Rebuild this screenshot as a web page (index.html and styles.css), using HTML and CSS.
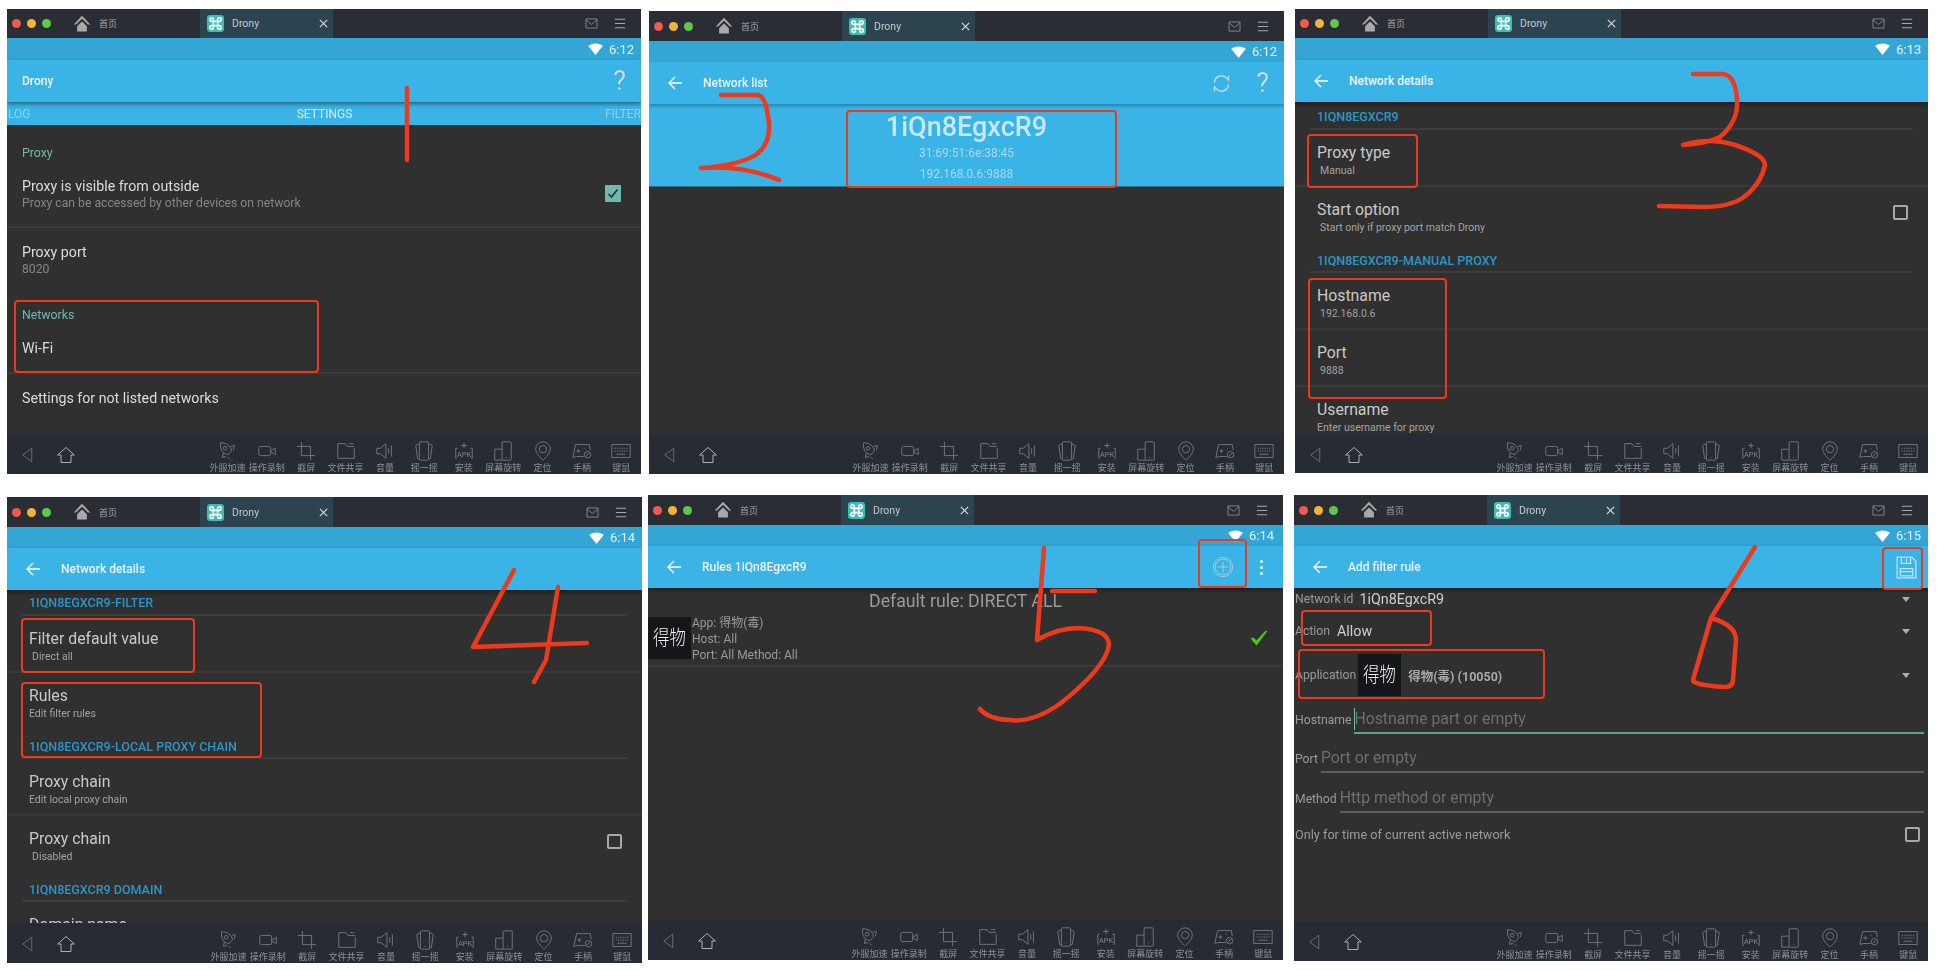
FILE: index.html
```html
<!DOCTYPE html>
<html lang="zh-CN">
<head>
  <meta charset="UTF-8">
  <title>Drony 设置步骤</title>
  <link rel="stylesheet" href="styles.css">
</head>
<body>
  <!-- icon sprite -->
  <svg class="sprite" xmlns="http://www.w3.org/2000/svg">
    <symbol id="i-rocket" viewBox="0 0 24 24"><path d="M5 3c6 0 11 3 12 9l-4 4C7 15 4 10 5 3z"/><circle cx="10" cy="9" r="2"/><path d="M16 7l4-1-1 5M8 14l-1 5 4-1M13 19l2 2"/></symbol>
    <symbol id="i-video" viewBox="0 0 24 24"><rect x="3" y="7" width="13" height="10" rx="2"/><path d="M16 12l5-3v7l-5-3"/></symbol>
    <symbol id="i-crop" viewBox="0 0 24 24"><path d="M7 2v15h15M2 7h15v15"/></symbol>
    <symbol id="i-folder" viewBox="0 0 24 24"><path d="M21 9v11H3V4h8l2 3h8M15 4h5"/></symbol>
    <symbol id="i-sound" viewBox="0 0 24 24"><path d="M3 9v6h4l6 5V4L7 9zM16 9v6M19 6v12"/></symbol>
    <symbol id="i-shake" viewBox="0 0 24 24"><rect x="7" y="2" width="10" height="20" rx="1"/><path d="M7 4L3 6l2 14 2 1M17 4l4 2-2 14-2 1M11.500 19h1"/></symbol>
    <symbol id="i-apk" viewBox="0 0 24 24"><path d="M5 9H3v11h1M19 9h2v11h-1M12 3v6M9 6h6"/><text class="apk-text" x="12" y="19">APK</text></symbol>
    <symbol id="i-rotate" viewBox="0 0 24 24"><rect x="11" y="2" width="10" height="20" rx="1"/><path d="M11 10H3v12h8M15.500 19h1"/></symbol>
    <symbol id="i-pin" viewBox="0 0 24 24"><path d="M12 2a8 8 0 0 1 8 8c0 5-8 12-8 12S4 15 4 10a8 8 0 0 1 8-8z"/><circle cx="12" cy="10" r="4"/></symbol>
    <symbol id="i-pad" viewBox="0 0 24 24"><path d="M5 5h15l1 6M14 18H6l-4 1L5 5M6 12h4M8 10v4M14 9h1"/><circle cx="18" cy="16" r="3.500"/><path d="M16 18l4-4"/></symbol>
    <symbol id="i-keys" viewBox="0 0 24 24"><rect x="2" y="5" width="20" height="14"/><path d="M5 9h14M5 12h14" stroke-dasharray="1.500 1"/><path d="M7 15.500h10"/></symbol>
    <symbol id="i-back" viewBox="0 0 24 24"><path d="M17 3L5 12l12 9z"/></symbol>
    <symbol id="i-house" viewBox="0 0 24 24"><path d="M2 12L12 3l10 9h-4v9H6v-9z"/></symbol>
    <symbol id="i-home" viewBox="0 0 24 24"><path d="M12 1L1 12.500h3L12 5l8 7.500h3zM5.500 15L12 8.500l6.500 6.500v7h-13z"/></symbol>
    <symbol id="i-cmd" viewBox="0 0 24 24"><path d="M9 9h6v6H9zM9 9H6.500A2.500 2.500 0 1 1 9 6.500zM15 9V6.500A2.500 2.500 0 1 1 17.500 9zM15 15h2.500a2.500 2.500 0 1 1-2.500 2.500zM9 15v2.500A2.500 2.500 0 1 1 6.500 15z"/></symbol>
    <symbol id="i-x" viewBox="0 0 12 12"><path d="M2 2l8 8M10 2l-8 8"/></symbol>
    <symbol id="i-mail" viewBox="0 0 14 12"><path d="M1 1h12v10H1zM1 2l6 5 6-5"/></symbol>
    <symbol id="i-menu" viewBox="0 0 14 14"><path d="M1 2h12M1 7h12M1 12h12"/></symbol>
    <symbol id="i-wifi" viewBox="0 0 16 13"><path d="M0 3Q8-2 16 3L8 13z"/></symbol>
    <symbol id="i-arrow" viewBox="0 0 16 16"><path d="M15 8H2M8 2L2 8l6 6"/></symbol>
    <symbol id="i-sync" viewBox="0 0 24 24"><path d="M4 11a8 8 0 0 1 14-5l2 2V3M20 13a8 8 0 0 1-14 5l-2-2v5"/></symbol>
    <symbol id="i-plus" viewBox="0 0 24 24"><circle cx="12" cy="12" r="10.500"/><circle cx="12" cy="12" r="8.500"/><path d="M12 6v12M6 12h12"/></symbol>
    <symbol id="i-save" viewBox="0 0 20 24"><path d="M1 2h14l4 4v16H1zM5 2v6h9V2M10 3v4M4 13h12v7H4zM4 16h12"/></symbol>
    <symbol id="i-tick" viewBox="0 0 24 24"><path d="M2 13l7 8L22 4l-2-1L9 15l-4-4z"/></symbol>
    <symbol id="i-check" viewBox="0 0 16 16"><path d="M3.500 8.500l3 3 6-7.500"/></symbol>
  </svg>

  <main class="sheet">

    <!-- 1 -->
    <section class="win win-1">
      <div class="screen short">
        <header class="tabbar">
          <span class="dot dot-red"></span><span class="dot dot-yellow"></span><span class="dot dot-green"></span>
          <svg class="home-ico"><use href="#i-home"/></svg><span class="home-txt">首页</span>
          <div class="tab"><svg class="tab-ico"><use href="#i-cmd"/></svg><span class="tab-txt">Drony</span><svg class="tab-x"><use href="#i-x"/></svg></div>
          <svg class="mail"><use href="#i-mail"/></svg><svg class="menu"><use href="#i-menu"/></svg>
        </header>
        <div class="status"><svg class="wifi"><use href="#i-wifi"/></svg><span>6:12</span></div>
        <div class="toolbar"><span class="title title-main">Drony</span><span class="help">?</span></div>
        <div class="tabs"><span>LOG</span><span class="tabs-on">SETTINGS</span><span class="tabs-end">FILTER</span></div>
        <div class="body">
          <div class="cat cat-first">Proxy</div>
          <div class="pref pref-tight line"><div><div class="pref-t">Proxy is visible from outside</div><div class="pref-s">Proxy can be accessed by other devices on network</div></div><span class="check-on"><svg><use href="#i-check"/></svg></span></div>
          <div class="pref"><div><div class="pref-t">Proxy port</div><div class="pref-s">8020</div></div></div>
          <div class="cat">Networks</div>
          <div class="pref pref-wifi line"><div class="pref-t">Wi-Fi</div></div>
          <div class="pref"><div class="pref-t">Settings for not listed networks</div></div>
        </div>
        <footer class="navbar">
          <svg class="nav-back"><use href="#i-back"/></svg><svg class="nav-home"><use href="#i-house"/></svg>
          <div class="tools">
            <div class="tool"><svg><use href="#i-rocket"/></svg><span>外服加速</span></div>
            <div class="tool"><svg><use href="#i-video"/></svg><span>操作录制</span></div>
            <div class="tool"><svg><use href="#i-crop"/></svg><span>截屏</span></div>
            <div class="tool"><svg><use href="#i-folder"/></svg><span>文件共享</span></div>
            <div class="tool"><svg><use href="#i-sound"/></svg><span>音量</span></div>
            <div class="tool"><svg><use href="#i-shake"/></svg><span>摇一摇</span></div>
            <div class="tool"><svg><use href="#i-apk"/></svg><span>安装</span></div>
            <div class="tool"><svg><use href="#i-rotate"/></svg><span>屏幕旋转</span></div>
            <div class="tool"><svg><use href="#i-pin"/></svg><span>定位</span></div>
            <div class="tool"><svg><use href="#i-pad"/></svg><span>手柄</span></div>
            <div class="tool"><svg><use href="#i-keys"/></svg><span>键鼠</span></div>
          </div>
        </footer>
      </div>
      <svg class="marks" viewBox="0 0 634 465">
        <path d="M400 79V151"/>
        <rect class="box" x="8" y="292" width="303" height="71" rx="3"/>
      </svg>
    </section>

    <!-- 2 -->
    <section class="win win-2">
      <div class="screen">
        <header class="tabbar">
          <span class="dot dot-red"></span><span class="dot dot-yellow"></span><span class="dot dot-green"></span>
          <svg class="home-ico"><use href="#i-home"/></svg><span class="home-txt">首页</span>
          <div class="tab"><svg class="tab-ico"><use href="#i-cmd"/></svg><span class="tab-txt">Drony</span><svg class="tab-x"><use href="#i-x"/></svg></div>
          <svg class="mail"><use href="#i-mail"/></svg><svg class="menu"><use href="#i-menu"/></svg>
        </header>
        <div class="status"><svg class="wifi"><use href="#i-wifi"/></svg><span>6:12</span></div>
        <div class="toolbar toolbar-flat"><svg class="arrow"><use href="#i-arrow"/></svg><span class="title">Network list</span><svg class="act act-sync"><use href="#i-sync"/></svg><span class="help help-near">?</span></div>
        <div class="body">
          <div class="net">
            <div class="net-id">1iQn8EgxcR9</div>
            <div class="net-sub">31:69:51:6e:38:45</div>
            <div class="net-sub">192.168.0.6:9888</div>
          </div>
        </div>
        <footer class="navbar">
          <svg class="nav-back"><use href="#i-back"/></svg><svg class="nav-home"><use href="#i-house"/></svg>
          <div class="tools">
            <div class="tool"><svg><use href="#i-rocket"/></svg><span>外服加速</span></div>
            <div class="tool"><svg><use href="#i-video"/></svg><span>操作录制</span></div>
            <div class="tool"><svg><use href="#i-crop"/></svg><span>截屏</span></div>
            <div class="tool"><svg><use href="#i-folder"/></svg><span>文件共享</span></div>
            <div class="tool"><svg><use href="#i-sound"/></svg><span>音量</span></div>
            <div class="tool"><svg><use href="#i-shake"/></svg><span>摇一摇</span></div>
            <div class="tool"><svg><use href="#i-apk"/></svg><span>安装</span></div>
            <div class="tool"><svg><use href="#i-rotate"/></svg><span>屏幕旋转</span></div>
            <div class="tool"><svg><use href="#i-pin"/></svg><span>定位</span></div>
            <div class="tool"><svg><use href="#i-pad"/></svg><span>手柄</span></div>
            <div class="tool"><svg><use href="#i-keys"/></svg><span>键鼠</span></div>
          </div>
        </footer>
      </div>
      <svg class="marks" viewBox="0 0 635 463">
        <path d="M72 84H108Q116 84 119 105Q124 130 108 143Q92 154 52 157Q95 154 130 169"/>
        <rect class="box" x="198" y="100" width="269" height="76" rx="3"/>
      </svg>
    </section>

    <!-- 3 -->
    <section class="win win-3">
      <div class="screen short">
        <header class="tabbar">
          <span class="dot dot-red"></span><span class="dot dot-yellow"></span><span class="dot dot-green"></span>
          <svg class="home-ico"><use href="#i-home"/></svg><span class="home-txt">首页</span>
          <div class="tab"><svg class="tab-ico"><use href="#i-cmd"/></svg><span class="tab-txt">Drony</span><svg class="tab-x"><use href="#i-x"/></svg></div>
          <svg class="mail"><use href="#i-mail"/></svg><svg class="menu"><use href="#i-menu"/></svg>
        </header>
        <div class="status"><svg class="wifi"><use href="#i-wifi"/></svg><span>6:13</span></div>
        <div class="toolbar"><svg class="arrow"><use href="#i-arrow"/></svg><span class="title">Network details</span></div>
        <div class="body">
          <div class="head head-top">1IQN8EGXCR9</div>
          <div class="item line"><div class="item-t">Proxy type</div><div class="item-s">Manual</div></div>
          <div class="item"><div class="item-row"><div><div class="item-t">Start option</div><div class="item-s">Start only if proxy port match Drony</div></div><span class="check"></span></div></div>
          <div class="head head-next">1IQN8EGXCR9-MANUAL PROXY</div>
          <div class="item line"><div class="item-t">Hostname</div><div class="item-s">192.168.0.6</div></div>
          <div class="item line"><div class="item-t">Port</div><div class="item-s">9888</div></div>
          <div class="item"><div class="item-t">Username</div><div class="item-s item-s-flush">Enter username for proxy</div></div>
        </div>
        <footer class="navbar">
          <svg class="nav-back"><use href="#i-back"/></svg><svg class="nav-home"><use href="#i-house"/></svg>
          <div class="tools">
            <div class="tool"><svg><use href="#i-rocket"/></svg><span>外服加速</span></div>
            <div class="tool"><svg><use href="#i-video"/></svg><span>操作录制</span></div>
            <div class="tool"><svg><use href="#i-crop"/></svg><span>截屏</span></div>
            <div class="tool"><svg><use href="#i-folder"/></svg><span>文件共享</span></div>
            <div class="tool"><svg><use href="#i-sound"/></svg><span>音量</span></div>
            <div class="tool"><svg><use href="#i-shake"/></svg><span>摇一摇</span></div>
            <div class="tool"><svg><use href="#i-apk"/></svg><span>安装</span></div>
            <div class="tool"><svg><use href="#i-rotate"/></svg><span>屏幕旋转</span></div>
            <div class="tool"><svg><use href="#i-pin"/></svg><span>定位</span></div>
            <div class="tool"><svg><use href="#i-pad"/></svg><span>手柄</span></div>
            <div class="tool"><svg><use href="#i-keys"/></svg><span>键鼠</span></div>
          </div>
        </footer>
      </div>
      <svg class="marks" viewBox="0 0 633 464">
        <path d="M398 65H428Q440 66 442 90Q444 112 425 128Q410 135 388 136Q415 128 440 136Q470 146 470 156Q466 175 449 188Q435 198 408 198L364 197"/>
        <rect class="box" x="13" y="126" width="109" height="52" rx="3"/>
        <rect class="box" x="14" y="270" width="137" height="119" rx="3"/>
      </svg>
    </section>

    <!-- 4 -->
    <section class="win win-4">
      <div class="screen">
        <header class="tabbar">
          <span class="dot dot-red"></span><span class="dot dot-yellow"></span><span class="dot dot-green"></span>
          <svg class="home-ico"><use href="#i-home"/></svg><span class="home-txt">首页</span>
          <div class="tab"><svg class="tab-ico"><use href="#i-cmd"/></svg><span class="tab-txt">Drony</span><svg class="tab-x"><use href="#i-x"/></svg></div>
          <svg class="mail"><use href="#i-mail"/></svg><svg class="menu"><use href="#i-menu"/></svg>
        </header>
        <div class="status"><svg class="wifi"><use href="#i-wifi"/></svg><span>6:14</span></div>
        <div class="toolbar"><svg class="arrow"><use href="#i-arrow"/></svg><span class="title">Network details</span></div>
        <div class="body">
          <div class="head">1IQN8EGXCR9-FILTER</div>
          <div class="item line"><div class="item-t">Filter default value</div><div class="item-s">Direct all</div></div>
          <div class="item"><div class="item-t">Rules</div><div class="item-s item-s-flush">Edit filter rules</div></div>
          <div class="head head-next">1IQN8EGXCR9-LOCAL PROXY CHAIN</div>
          <div class="item line"><div class="item-t">Proxy chain</div><div class="item-s item-s-flush">Edit local proxy chain</div></div>
          <div class="item"><div class="item-row"><div><div class="item-t">Proxy chain</div><div class="item-s">Disabled</div></div><span class="check"></span></div></div>
          <div class="head head-next">1IQN8EGXCR9 DOMAIN</div>
          <div class="item"><div class="item-t">Domain name</div></div>
        </div>
        <footer class="navbar">
          <svg class="nav-back"><use href="#i-back"/></svg><svg class="nav-home"><use href="#i-house"/></svg>
          <div class="tools">
            <div class="tool"><svg><use href="#i-rocket"/></svg><span>外服加速</span></div>
            <div class="tool"><svg><use href="#i-video"/></svg><span>操作录制</span></div>
            <div class="tool"><svg><use href="#i-crop"/></svg><span>截屏</span></div>
            <div class="tool"><svg><use href="#i-folder"/></svg><span>文件共享</span></div>
            <div class="tool"><svg><use href="#i-sound"/></svg><span>音量</span></div>
            <div class="tool"><svg><use href="#i-shake"/></svg><span>摇一摇</span></div>
            <div class="tool"><svg><use href="#i-apk"/></svg><span>安装</span></div>
            <div class="tool"><svg><use href="#i-rotate"/></svg><span>屏幕旋转</span></div>
            <div class="tool"><svg><use href="#i-pin"/></svg><span>定位</span></div>
            <div class="tool"><svg><use href="#i-pad"/></svg><span>手柄</span></div>
            <div class="tool"><svg><use href="#i-keys"/></svg><span>键鼠</span></div>
          </div>
        </footer>
      </div>
      <svg class="marks" viewBox="0 0 635 466">
        <path d="M507 73L466 150L580 146M551 90L539 163L527 185"/>
        <rect class="box" x="15" y="122" width="172" height="53" rx="3"/>
        <rect class="box" x="15" y="186" width="239" height="74" rx="3"/>
      </svg>
    </section>

    <!-- 5 -->
    <section class="win win-5">
      <div class="screen">
        <header class="tabbar">
          <span class="dot dot-red"></span><span class="dot dot-yellow"></span><span class="dot dot-green"></span>
          <svg class="home-ico"><use href="#i-home"/></svg><span class="home-txt">首页</span>
          <div class="tab"><svg class="tab-ico"><use href="#i-cmd"/></svg><span class="tab-txt">Drony</span><svg class="tab-x"><use href="#i-x"/></svg></div>
          <svg class="mail"><use href="#i-mail"/></svg><svg class="menu"><use href="#i-menu"/></svg>
        </header>
        <div class="status"><svg class="wifi"><use href="#i-wifi"/></svg><span>6:14</span></div>
        <div class="toolbar"><svg class="arrow"><use href="#i-arrow"/></svg><span class="title">Rules 1iQn8EgxcR9</span><svg class="act act-plus"><use href="#i-plus"/></svg><span class="more"><i></i><i></i><i></i></span></div>
        <div class="body">
          <div class="rule-head">Default rule: DIRECT ALL</div>
          <div class="rule">
            <span class="app-ico"><span>得物</span></span>
            <div class="rule-txt"><div>App: 得物(毒)</div><div>Host: All</div><div>Port: All Method: All</div></div>
            <svg class="tick"><use href="#i-tick"/></svg>
          </div>
        </div>
        <footer class="navbar">
          <svg class="nav-back"><use href="#i-back"/></svg><svg class="nav-home"><use href="#i-house"/></svg>
          <div class="tools">
            <div class="tool"><svg><use href="#i-rocket"/></svg><span>外服加速</span></div>
            <div class="tool"><svg><use href="#i-video"/></svg><span>操作录制</span></div>
            <div class="tool"><svg><use href="#i-crop"/></svg><span>截屏</span></div>
            <div class="tool"><svg><use href="#i-folder"/></svg><span>文件共享</span></div>
            <div class="tool"><svg><use href="#i-sound"/></svg><span>音量</span></div>
            <div class="tool"><svg><use href="#i-shake"/></svg><span>摇一摇</span></div>
            <div class="tool"><svg><use href="#i-apk"/></svg><span>安装</span></div>
            <div class="tool"><svg><use href="#i-rotate"/></svg><span>屏幕旋转</span></div>
            <div class="tool"><svg><use href="#i-pin"/></svg><span>定位</span></div>
            <div class="tool"><svg><use href="#i-pad"/></svg><span>手柄</span></div>
            <div class="tool"><svg><use href="#i-keys"/></svg><span>键鼠</span></div>
          </div>
        </footer>
      </div>
      <svg class="marks" viewBox="0 0 635 465">
        <path d="M396 53L389 145Q410 133 431 133Q461 135 461 150Q458 172 413 208Q385 228 362 225Q340 224 332 214M404 96H447"/>
        <rect class="box" x="551" y="45" width="47" height="47" rx="3"/>
      </svg>
    </section>

    <!-- 6 -->
    <section class="win win-6">
      <div class="screen">
        <header class="tabbar">
          <span class="dot dot-red"></span><span class="dot dot-yellow"></span><span class="dot dot-green"></span>
          <svg class="home-ico"><use href="#i-home"/></svg><span class="home-txt">首页</span>
          <div class="tab"><svg class="tab-ico"><use href="#i-cmd"/></svg><span class="tab-txt">Drony</span><svg class="tab-x"><use href="#i-x"/></svg></div>
          <svg class="mail"><use href="#i-mail"/></svg><svg class="menu"><use href="#i-menu"/></svg>
        </header>
        <div class="status"><svg class="wifi"><use href="#i-wifi"/></svg><span>6:15</span></div>
        <div class="toolbar"><svg class="arrow"><use href="#i-arrow"/></svg><span class="title">Add filter rule</span><svg class="act act-save"><use href="#i-save"/></svg></div>
        <div class="body">
          <div class="frow frow-net"><label>Network id</label><span class="val">1iQn8EgxcR9</span><span class="drop"></span></div>
          <div class="frow frow-act"><label>Action</label><span class="val val-allow">Allow</span><span class="drop"></span></div>
          <div class="frow frow-app"><label>Application</label><span class="app-ico app-ico-sel"><span>得物</span></span><span class="val-app">得物(毒) (10050)</span><span class="drop"></span></div>
          <div class="frow field field-host"><label>Hostname</label><div class="input input-on"><span class="caret"></span>Hostname part or empty</div></div>
          <div class="frow field"><label>Port</label><div class="input">Port or empty</div></div>
          <div class="frow field field-method"><label>Method</label><div class="input">Http method or empty</div></div>
          <div class="frow frow-only"><label>Only for time of current active network</label><span class="check"></span></div>
        </div>
        <footer class="navbar">
          <svg class="nav-back"><use href="#i-back"/></svg><svg class="nav-home"><use href="#i-house"/></svg>
          <div class="tools">
            <div class="tool"><svg><use href="#i-rocket"/></svg><span>外服加速</span></div>
            <div class="tool"><svg><use href="#i-video"/></svg><span>操作录制</span></div>
            <div class="tool"><svg><use href="#i-crop"/></svg><span>截屏</span></div>
            <div class="tool"><svg><use href="#i-folder"/></svg><span>文件共享</span></div>
            <div class="tool"><svg><use href="#i-sound"/></svg><span>音量</span></div>
            <div class="tool"><svg><use href="#i-shake"/></svg><span>摇一摇</span></div>
            <div class="tool"><svg><use href="#i-apk"/></svg><span>安装</span></div>
            <div class="tool"><svg><use href="#i-rotate"/></svg><span>屏幕旋转</span></div>
            <div class="tool"><svg><use href="#i-pin"/></svg><span>定位</span></div>
            <div class="tool"><svg><use href="#i-pad"/></svg><span>手柄</span></div>
            <div class="tool"><svg><use href="#i-keys"/></svg><span>键鼠</span></div>
          </div>
        </footer>
      </div>
      <svg class="marks" viewBox="0 0 634 466">
        <path d="M461 52L417 123L399 185Q398 190 430 192Q439 192 439 185L442 145Q442 130 417 123"/>
        <rect class="box" x="589" y="53" width="39" height="41" rx="3"/>
        <rect class="box" x="8" y="116" width="129" height="34" rx="3"/>
        <rect class="box" x="5" y="155" width="245" height="48" rx="3"/>
      </svg>
    </section>

  </main>
</body>
</html>
```

FILE: styles.css
```css
* {
  box-sizing: border-box;
}
html, body {
  height: 100%;
}
body {
  margin: 0;
  background: #fff;
  overflow: hidden;
  font-family: Roboto, "Noto Sans CJK SC", sans-serif;
}
.sprite {
  display: none;
}
.sheet {
  display: grid;
  grid-template-columns: 641px 646px 1fr;
  grid-template-rows: 486px 1fr;
  padding: 9px 0 0 7px;
}

/* windows */
.win {
  position: relative;
  overflow: hidden;
}
.win-1 { width: 634px; height: 465px; }
.win-2 { width: 635px; height: 463px; margin: 2px 0 0 1px; }
.win-3 { width: 633px; height: 464px; margin-left: 1px; }
.win-4 { width: 635px; height: 466px; margin-top: 2px; }
.win-5 { width: 635px; height: 465px; }
.win-6 { width: 634px; height: 466px; }

.screen {
  height: 100%;
  display: flex;
  flex-direction: column;
  background: #303030;
  filter: blur(.45px);
}
.marks {
  position: absolute;
  inset: 0;
  width: 100%;
  height: 100%;
  fill: none;
  stroke: #ee3a1c;
  stroke-width: 4.5;
  stroke-linecap: round;
  stroke-linejoin: round;
}
.marks .box {
  stroke-width: 2;
}

/* title bar */
.tabbar {
  height: 30px;
  flex: none;
  display: flex;
  align-items: center;
  background: #2a2d34;
  padding-left: 5px;
}
.short .tabbar { height: 29px; }
.dot {
  width: 9px;
  height: 9px;
  border-radius: 50%;
  margin-right: 6px;
}
.dot-red { background: #ed5a50; }
.dot-yellow { background: #f5b335; }
.dot-green { background: #5ec84a; }
.home-ico {
  width: 18px;
  height: 18px;
  margin-left: 16px;
  fill: #a9a9a9;
  stroke: none;
}
.home-txt {
  margin-left: 8px;
  font-size: 9px;
  color: #a5a7ab;
}
.tab {
  width: 133px;
  height: 100%;
  margin-left: 83px;
  padding-left: 7px;
  display: flex;
  align-items: center;
  background: #2c4450;
}
.tab-ico {
  width: 17px;
  height: 17px;
  border-radius: 3px;
  background: #3dbdb3;
  fill: none;
  stroke: #fff;
  stroke-width: 2.2;
}
.tab-txt {
  margin-left: 8px;
  font-size: 10.500px;
  color: #c4c8cc;
}
.tab-x {
  width: 11px;
  height: 11px;
  margin-left: auto;
  margin-right: 4px;
  fill: none;
  stroke: #d4d6d8;
  stroke-width: 1.3;
}
.mail {
  width: 13px;
  height: 11px;
  margin-left: auto;
  fill: none;
  stroke: #85888d;
}
.menu {
  width: 12px;
  height: 13px;
  margin: 0 15px 0 16px;
  fill: none;
  stroke: #a5a7ab;
  stroke-width: 1.3;
}

/* android bars */
.status {
  height: 21px;
  flex: none;
  display: flex;
  align-items: center;
  justify-content: flex-end;
  padding-right: 7px;
  background: #33a6d6;
  font-size: 13px;
  color: #e6f4fa;
}
.short .status { height: 22px; }
.win-5 .status { padding-right: 9px; }
.wifi {
  width: 15px;
  height: 12px;
  margin-right: 6px;
  fill: #fff;
  stroke: none;
}
.toolbar {
  height: 42px;
  flex: none;
  display: flex;
  align-items: center;
  background: #3ab3e6;
  box-shadow: 0 2px 4px rgba(0, 0, 0, .45);
  position: relative;
}
.toolbar-flat {
  box-shadow: 0 2px 3px rgba(0, 40, 60, .35);
}
.arrow {
  width: 16px;
  height: 16px;
  margin-left: 18px;
  fill: none;
  stroke: #fff;
  stroke-width: 1.4;
}
.title {
  margin-left: 20px;
  font-size: 12px;
  font-weight: 500;
  color: #eef8fc;
}
.title-main {
  margin-left: 15px;
}
.help {
  margin-left: auto;
  margin-right: 15px;
  font-size: 27px;
  line-height: 1;
  color: #bfe3f3;
  text-shadow: 0 0 1px #55707e;
}
.help-near {
  margin-left: 24px;
  margin-right: 15px;
}
.act {
  margin-left: auto;
  fill: none;
  stroke: #b5dced;
}
.act-sync {
  width: 21px;
  height: 21px;
  stroke: #bcdcea;
  stroke-width: 1.6;
}
.act-plus {
  width: 22px;
  height: 22px;
  margin-right: 26px;
  stroke: #a5d0e3;
  stroke-width: 1;
}
.more {
  display: flex;
  flex-direction: column;
  gap: 3px;
  margin-right: 20px;
}
.more i {
  width: 3px;
  height: 3px;
  border-radius: 50%;
  background: #fff;
}
.act-save {
  width: 21px;
  height: 25px;
  margin-right: 11px;
  stroke: #c6e4f1;
  stroke-width: 1.2;
}
.tabs {
  height: 23px;
  flex: none;
  display: grid;
  grid-template-columns: 1fr auto 1fr;
  align-items: center;
  background: #3ab3e6;
  font-size: 12px;
  color: #8ed0ee;
  padding-left: 1px;
}
.tabs-on {
  color: #d7eef8;
}
.tabs-end {
  text-align: right;
}
.body {
  flex: 1;
  min-height: 0;
  overflow: hidden;
  color: #ddd;
}

/* tab 1 list */
.line {
  border-bottom: 2px solid #3a3a3a;
}
.cat {
  padding: 20px 15px 0;
  height: 38px;
  font-size: 12.300px;
  line-height: 18px;
  color: #6fb9ae;
}
.cat-first {
  height: 46px;
  padding-top: 19px;
}
.pref {
  height: 58px;
  padding: 15px 20px 0 15px;
  display: flex;
  justify-content: space-between;
}
.pref-tight {
  height: 57px;
  padding-top: 6px;
}
.pref-wifi {
  height: 50px;
}
.pref-t {
  font-size: 14.200px;
  line-height: 18px;
  color: #dcdcdc;
}
.pref-s {
  margin-top: 1px;
  font-size: 12.200px;
  line-height: 15px;
  color: #858585;
}
.check {
  width: 15px;
  height: 15px;
  margin-top: 4px;
  border: 2px solid #a9a9a9;
  border-radius: 2px;
}
.check-on {
  width: 16px;
  height: 17px;
  margin-top: 8px;
  background: #6fb9ae;
  border-radius: 1px;
}
.check-on svg {
  display: block;
  width: 16px;
  height: 17px;
  fill: none;
  stroke: #22302e;
  stroke-width: 1.6;
}

/* network list */
.net {
  height: 83px;
  padding-top: 7px;
  background: #3ab3e6;
  border-bottom: 1px solid #2f6f88;
  text-align: center;
}
.net-id {
  font-size: 27px;
  line-height: 32px;
  font-weight: 500;
  color: #c7e8f6;
}
.net-sub {
  font-size: 12px;
  line-height: 21px;
  color: #a9daef;
}

/* network details */
.head {
  height: 26px;
  margin: 0 15px;
  padding: 5px 7px 0;
  border-bottom: 2px solid #3d3d3d;
  font-size: 12.500px;
  line-height: 15px;
  font-weight: 500;
  color: #2b96c6;
}
.head-top {
  height: 28px;
  padding-top: 7px;
}
.head-next {
  height: 29px;
  padding-top: 9px;
}
.item {
  height: 57px;
  padding: 14px 20px 0 22px;
}
.item-row {
  display: flex;
  justify-content: space-between;
}
.item-t {
  font-size: 15.800px;
  line-height: 18px;
  color: #c9c9c9;
}
.item-s {
  margin: 1px 0 0 3px;
  font-size: 10.500px;
  line-height: 15px;
  color: #a3a3a3;
}
.item-s-flush {
  margin-left: 0;
}

/* rules */
.rule-head {
  margin-top: 1px;
  height: 24px;
  font-size: 17.700px;
  line-height: 24px;
  text-align: center;
  color: #9a9a9a;
}
.rule {
  height: 50px;
  margin-top: 4px;
  display: flex;
  border-bottom: 2px solid #3a3a3a;
}
.app-ico {
  width: 43px;
  height: 42px;
  background: #15161a;
  color: #f2f2f2;
  font-size: 20px;
  font-weight: 300;
  line-height: 42px;
  text-align: center;
}
.app-ico span {
  display: block;
  white-space: nowrap;
  transform: scaleX(.82);
}
.rule-txt {
  margin-top: -2px;
  margin-left: 1px;
  font-size: 12px;
  line-height: 16px;
  color: #999;
}
.tick {
  width: 20px;
  height: 20px;
  margin: 11px 14px 0 auto;
  fill: #4cc31f;
  stroke: none;
}

/* add filter form */
.frow {
  display: flex;
  align-items: center;
  padding-left: 1px;
}
.frow label {
  font-size: 12.200px;
  color: #9a9a9a;
  white-space: nowrap;
}
.frow-net { height: 22px; }
.frow-act { height: 42px; }
.frow-app { height: 46px; }
.val {
  margin-left: 6px;
  font-size: 14.300px;
  color: #cfcfcf;
}
.val-allow {
  margin-left: 7px;
}
.app-ico-sel {
  margin-left: 2px;
}
.val-app {
  margin-left: 7px;
  font-size: 12.500px;
  font-weight: 700;
  color: #a8a8a8;
}
.drop {
  width: 0;
  height: 0;
  margin: 0 18px 0 auto;
  border: 4px solid transparent;
  border-top: 5px solid #aeaeae;
  border-bottom: 0;
}
.field {
  height: 39px;
  align-items: flex-end;
}
.field-host { height: 36px; }
.field-method { height: 40px; }
.field label {
  line-height: 28px;
}
.input {
  flex: 1;
  margin: 0 4px 0 3px;
  height: 28px;
  border-bottom: 2px solid #5c5c5c;
  font-size: 15.800px;
  line-height: 26px;
  color: #6e6e6e;
  position: relative;
}
.input-on {
  border-bottom-color: #5f9e96;
}
.caret {
  position: absolute;
  left: 0;
  top: 2px;
  width: 1px;
  height: 22px;
  background: #6fb9ae;
}
.frow-only {
  height: 42px;
  justify-content: space-between;
  padding-right: 8px;
}
.frow-only label {
  font-size: 12.700px;
}
.frow-only .check {
  margin-top: 0;
}

/* bottom bar */
.navbar {
  height: 40px;
  flex: none;
  display: flex;
  align-items: center;
  background: #272c34;
  position: relative;
}
.win-3 .navbar { height: 39px; }
.nav-back {
  width: 18px;
  height: 18px;
  margin-left: 12px;
  margin-top: 2px;
  fill: none;
  stroke: #7b7f86;
}
.nav-home {
  width: 20px;
  height: 20px;
  margin-left: 19px;
  margin-top: 2px;
  fill: none;
  stroke: #c8cacc;
  stroke-width: 1;
}
.tools {
  margin-left: auto;
  display: flex;
}
.tool {
  width: 39.400px;
  padding-top: 6px;
  display: flex;
  flex-direction: column;
  align-items: center;
}
.tool svg {
  width: 22px;
  height: 22px;
  fill: none;
  stroke: #74787e;
  stroke-width: 1;
}
.tool span {
  font-size: 9px;
  line-height: 12px;
  color: #8d9095;
  white-space: nowrap;
}
.apk-text {
  font-size: 8px;
  text-anchor: middle;
  fill: #83878d;
  stroke: none;
}
```
